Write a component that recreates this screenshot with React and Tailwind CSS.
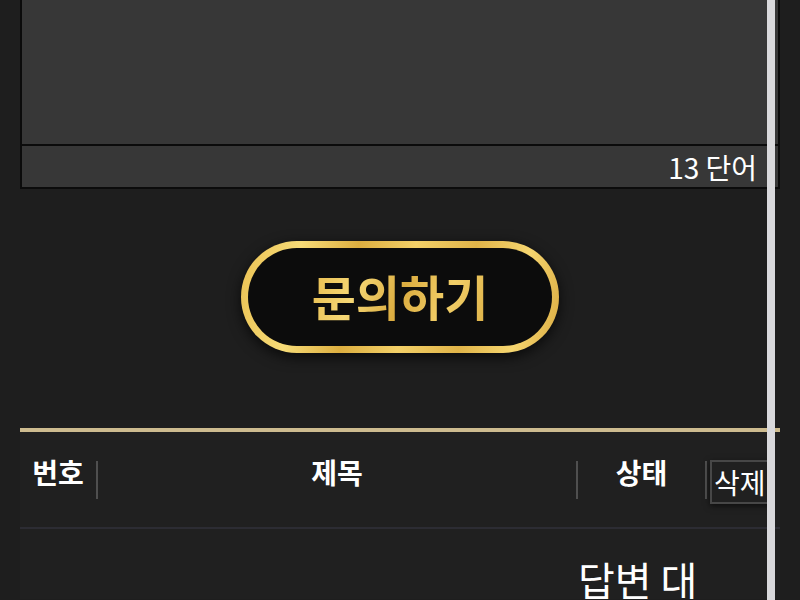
export default function App() {
  const kr = { fontFamily: '"Noto Sans CJK KR", "Noto Sans", sans-serif' };
  return (
    <div className="relative w-[800px] h-[600px] overflow-hidden bg-[#1e1e1e] px-5" style={kr}>
      {/* Editor box */}
      <div className="border-2 border-t-0 border-[#0b0b0b] bg-[#373737]">
        <div className="h-[144px] bg-[#373737]"></div>
        <div className="h-[43px] border-t-2 border-[#0b0b0b] flex items-center justify-end pr-[21px]">
          <span className="text-[28px] leading-none text-white">13 단어</span>
        </div>
      </div>

      {/* Button */}
      <div className="flex justify-center pt-[52px]">
        <div className="w-[318px] h-[112px] rounded-full p-[7px] shadow-[0_4px_14px_rgba(0,0,0,0.7)] bg-[linear-gradient(100deg,#ebc254_0%,#f7dc78_18%,#dcae40_35%,#f3d068_52%,#e0b449_70%,#f6d670_86%,#dbac42_100%)]">
          <div className="w-full h-full rounded-full bg-[#0c0c0c] flex items-center justify-center">
            <span className="text-[48px] font-bold leading-none bg-[linear-gradient(110deg,#e8bd50_0%,#f5d775_25%,#dbac40_50%,#f2cf68_75%,#deb248_100%)] bg-clip-text text-transparent pb-[4px]">
              문의하기
            </span>
          </div>
        </div>
      </div>

      {/* Table */}
      <div className="mt-[75px] bg-[#202020]">
        <div className="h-[4px] bg-[#cdbb8f]"></div>
        <div className="w-[747px] h-[95px] overflow-hidden flex items-center">
          <div className="w-[76px] shrink-0 text-center text-[28px] font-bold text-white leading-none pb-[16px]">번호</div>
          <div className="w-[2px] h-[38px] shrink-0 bg-[#4f4f4f]"></div>
          <div className="w-[478px] shrink-0 text-center text-[28px] font-bold text-white leading-none pb-[16px]">제목</div>
          <div className="w-[2px] h-[38px] shrink-0 bg-[#4f4f4f]"></div>
          <div className="w-[127px] shrink-0 text-center text-[28px] font-bold text-white leading-none pb-[16px]">상태</div>
          <div className="w-[2px] h-[38px] shrink-0 bg-[#4f4f4f]"></div>
          <div className="ml-[3px] w-[64px] h-[44px] shrink-0 border-2 border-[#474747] shadow-[0_2px_6px_rgba(0,0,0,0.6)] flex items-center pl-[2px] mt-[4px]">
            <span className="text-[28px] text-white leading-none whitespace-nowrap">삭제</span>
          </div>
        </div>
        <div className="h-[2px] bg-[#2c2c33]"></div>
        <div className="flex h-[70px] overflow-hidden">
          <div className="w-[558px] shrink-0"></div>
          <div className="w-[150px] shrink-0 pt-[24px] text-[40px] text-white leading-[1.3] whitespace-nowrap">
            답변 대<br />기
          </div>
        </div>
      </div>

      {/* Scrollbar overlay */}
      <div className="absolute top-0 bottom-0 left-[767px] w-[8px] bg-[#d9d9dc]"></div>
    </div>
  );
}
